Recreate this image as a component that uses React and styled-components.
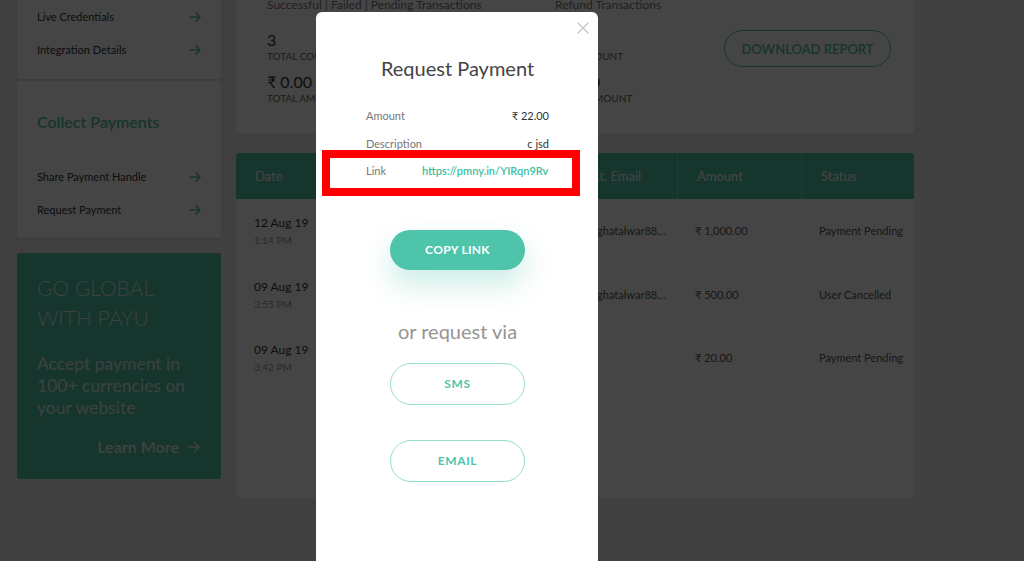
import React from 'react';
import styled, { createGlobalStyle } from 'styled-components';

const GREEN = '#52c2a3';
const TEAL = '#4ec5aa';

const GlobalStyle = createGlobalStyle`
  html, body { margin: 0; padding: 0; height: 100%; overflow: hidden; }
  body {
    background: #ebebeb;
    font-family: Lato, "Open Sans", "Noto Sans", "DejaVu Sans", sans-serif;
    color: #333;
  }
  * { box-sizing: border-box; }
`;

const Page = styled.div`
  display: flex;
  align-items: flex-start;
  gap: 15px;
  padding: 0 17px;
  margin-top: -33px;
`;

const Sidebar = styled.aside`
  width: 204px;
  flex: none;
  display: flex;
  flex-direction: column;
`;

const SideCard = styled.section`
  background: #fff;
  border-radius: 3px;
  box-shadow: 0 1px 3px rgba(0, 0, 0, 0.08);
  padding: ${(p) => p.$pad};
  margin-top: ${(p) => p.$gap || 0}px;
`;

const SectionTitle = styled.h3`
  margin: 0 0 27px;
  font-size: 16px;
  line-height: 22px;
  font-weight: 600;
  color: ${GREEN};
`;

const NavItem = styled.div`
  display: flex;
  justify-content: space-between;
  align-items: center;
  height: 33px;
  font-size: 11px;
  color: #333;
`;

const PromoCard = styled.section`
  margin-top: 15px;
  background: ${GREEN};
  border-radius: 3px;
  padding: 20px 21px 22px 20px;
  color: rgba(255, 255, 255, 0.82);
`;

const PromoTitle = styled.div`
  font-size: 21px;
  line-height: 30px;
  font-weight: 300;
  text-transform: uppercase;
`;

const PromoText = styled.div`
  margin-top: 20px;
  font-size: 17.5px;
  line-height: 22px;
  font-weight: 400;
`;

const LearnMore = styled.div`
  margin-top: 18px;
  display: flex;
  justify-content: flex-end;
  align-items: center;
  gap: 9px;
  font-size: 16px;
  line-height: 20px;
  font-weight: 700;
`;

const Main = styled.main`
  width: 678px;
  flex: none;
  display: flex;
  flex-direction: column;
`;

const SummaryCard = styled.section`
  background: #fff;
  border-radius: 3px;
  padding: 30px 23px 29px 31px;
  display: flex;
  align-items: flex-start;
`;

const StatGroup = styled.div`
  width: ${(p) => p.$width}px;
  flex: none;
`;

const StatTitle = styled.div`
  font-size: 12px;
  line-height: 16px;
  color: #777;
  white-space: nowrap;
`;

const StatValue = styled.div`
  margin-top: ${(p) => p.$gap}px;
  font-size: 16px;
  line-height: 20px;
  color: #333;
`;

const StatLabel = styled.div`
  font-size: 10px;
  line-height: 12px;
  text-transform: uppercase;
  color: #666;
`;

const DownloadButton = styled.button`
  margin-left: auto;
  margin-top: 33px;
  width: 167px;
  height: 37px;
  border: 1px solid ${GREEN};
  border-radius: 19px;
  background: transparent;
  color: ${GREEN};
  font-family: inherit;
  font-size: 13px;
  font-weight: 600;
  text-transform: uppercase;
  white-space: nowrap;
  padding: 0;
`;

const TableCard = styled.section`
  margin-top: 20px;
  height: 345px;
  background: #fff;
  border-radius: 3px;
  overflow: hidden;
`;

const COLS = '110px 106px 106px 119px 124px 113px';

const HeadRow = styled.div`
  display: grid;
  grid-template-columns: ${COLS};
  height: 46px;
  background: ${GREEN};
`;

const HeadCell = styled.div`
  display: flex;
  align-items: center;
  padding: 0 19px;
  font-size: 13px;
  color: #fff;
  white-space: nowrap;
  border-left: 1px solid rgba(255, 255, 255, 0.3);
  &:first-child { border-left: none; }
`;

const BodyRow = styled.div`
  display: grid;
  grid-template-columns: ${COLS};
  height: 63.5px;
`;

const Cell = styled.div`
  display: flex;
  flex-direction: column;
  justify-content: center;
  padding: 0 6px 0 18px;
  font-size: 11px;
  color: #555;
  min-width: 0;
  white-space: nowrap;
`;

const Ellipsis = styled.span`
  overflow: hidden;
  text-overflow: ellipsis;
`;

const DateMain = styled.div`
  font-size: 12px;
  color: #333;
`;

const DateTime = styled.div`
  margin-top: 4px;
  font-size: 10px;
  color: #999;
`;

const Overlay = styled.div`
  position: fixed;
  inset: 0;
  background: rgba(0, 0, 0, 0.73);
  z-index: 10;
`;

const Modal = styled.div`
  position: fixed;
  left: 316px;
  top: 12px;
  width: 282px;
  height: 600px;
  background: #fff;
  border-radius: 6px;
  z-index: 20;
  padding: 44px 49px 0 50px;
  display: flex;
  flex-direction: column;
  align-items: center;
`;

const Close = styled.button`
  position: absolute;
  top: 9px;
  right: 8px;
  width: 14px;
  height: 14px;
  padding: 0;
  border: none;
  background: none;
  display: flex;
`;

const ModalTitle = styled.h2`
  margin: 0;
  font-size: 20px;
  line-height: 24px;
  font-weight: 400;
  color: #444;
`;

const InfoList = styled.div`
  align-self: stretch;
  margin-top: 22px;
`;

const InfoRow = styled.div`
  display: flex;
  justify-content: space-between;
  align-items: center;
  height: 27.5px;
  font-size: 11px;
`;

const InfoLabel = styled.span`
  color: #777;
`;

const InfoValue = styled.span`
  color: #333;
`;

const LinkValue = styled.span`
  width: 127px;
  overflow: hidden;
  white-space: nowrap;
  color: #3dbf9f;
  font-weight: 600;
`;

const Annotation = styled.div`
  position: absolute;
  left: 6px;
  top: 138px;
  width: 258px;
  height: 46px;
  border: 8px solid #ff0000;
  pointer-events: none;
`;

const CopyButton = styled.button`
  margin-top: 45px;
  width: 135px;
  height: 40px;
  border: none;
  border-radius: 20px;
  background: ${TEAL};
  color: #fff;
  font-family: inherit;
  font-size: 12px;
  font-weight: 700;
  letter-spacing: 0.3px;
  box-shadow: 0 14px 28px rgba(78, 197, 170, 0.3);
`;

const OrText = styled.div`
  margin-top: 49px;
  font-size: 20px;
  line-height: 24px;
  color: #959595;
`;

const OutlineButton = styled.button`
  margin-top: ${(p) => p.$gap}px;
  width: 135px;
  height: 42px;
  border: 1.5px solid #92e0cc;
  border-radius: 21px;
  background: #fff;
  color: ${TEAL};
  font-family: inherit;
  font-size: 12px;
  font-weight: 700;
  letter-spacing: 0.6px;
`;

const Arrow = ({ color }) => (
  <svg width="12" height="10" viewBox="0 0 12 10" fill="none" stroke={color} strokeWidth="1.6" strokeLinecap="round" strokeLinejoin="round">
    <path d="M1 5h10M7 1l4 4-4 4" />
  </svg>
);

const rows = [
  { date: '12 Aug 19', time: '1:14 PM', name: 'c jsd', phone: '9876543210', email: 'amitghatalwar8877@gmail.com', amount: '₹ 1,000.00', status: 'Payment Pending' },
  { date: '09 Aug 19', time: '3:55 PM', name: 'test', phone: '9876543210', email: 'amitghatalwar8877@gmail.com', amount: '₹ 500.00', status: 'User Cancelled' },
  { date: '09 Aug 19', time: '3:42 PM', name: 'demo', phone: '9876543210', email: '', amount: '₹ 20.00', status: 'Payment Pending' },
];

export default function App() {
  return (
    <>
      <GlobalStyle />
      <Page>
        <Sidebar>
          <SideCard $pad="0 20px 13px">
            <NavItem>Test Credentials<Arrow color={GREEN} /></NavItem>
            <NavItem>Live Credentials<Arrow color={GREEN} /></NavItem>
            <NavItem>Integration Details<Arrow color={GREEN} /></NavItem>
          </SideCard>
          <SideCard $pad="30px 20px 12px" $gap={2}>
            <SectionTitle>Collect Payments</SectionTitle>
            <NavItem>Share Payment Handle<Arrow color={GREEN} /></NavItem>
            <NavItem>Request Payment<Arrow color={GREEN} /></NavItem>
          </SideCard>
          <PromoCard>
            <PromoTitle>Go Global<br />With PayU</PromoTitle>
            <PromoText>Accept payment in<br />100+ currencies on<br />your website</PromoText>
            <LearnMore>Learn More<Arrow color="rgba(255,255,255,0.85)" /></LearnMore>
          </PromoCard>
        </Sidebar>
        <Main>
          <SummaryCard>
            <StatGroup $width={288}>
              <StatTitle>Successful | Failed | Pending Transactions</StatTitle>
              <StatValue $gap={17}>3</StatValue>
              <StatLabel>Total Count</StatLabel>
              <StatValue $gap={10}>₹ 0.00</StatValue>
              <StatLabel>Total Amount</StatLabel>
            </StatGroup>
            <StatGroup $width={150}>
              <StatTitle>Refund Transactions</StatTitle>
              <StatValue $gap={17}>0</StatValue>
              <StatLabel>Total Count</StatLabel>
              <StatValue $gap={10}>₹ 0.00</StatValue>
              <StatLabel>Total Amount</StatLabel>
            </StatGroup>
            <DownloadButton>Download Report</DownloadButton>
          </SummaryCard>
          <TableCard>
            <HeadRow>
              <HeadCell>Date</HeadCell>
              <HeadCell>Name</HeadCell>
              <HeadCell>Phone</HeadCell>
              <HeadCell>Cust. Email</HeadCell>
              <HeadCell>Amount</HeadCell>
              <HeadCell>Status</HeadCell>
            </HeadRow>
            {rows.map((r, i) => (
              <BodyRow key={i}>
                <Cell>
                  <DateMain>{r.date}</DateMain>
                  <DateTime>{r.time}</DateTime>
                </Cell>
                <Cell><Ellipsis>{r.name}</Ellipsis></Cell>
                <Cell><Ellipsis>{r.phone}</Ellipsis></Cell>
                <Cell><Ellipsis>{r.email}</Ellipsis></Cell>
                <Cell>{r.amount}</Cell>
                <Cell>{r.status}</Cell>
              </BodyRow>
            ))}
          </TableCard>
        </Main>
      </Page>

      <Overlay />
      <Modal>
        <Close aria-label="Close">
          <svg width="14" height="14" viewBox="0 0 14 14" stroke="#c4c4c4" strokeWidth="1.2" strokeLinecap="round">
            <path d="M2 2l10 10M12 2L2 12" />
          </svg>
        </Close>
        <ModalTitle>Request Payment</ModalTitle>
        <InfoList>
          <InfoRow><InfoLabel>Amount</InfoLabel><InfoValue>₹ 22.00</InfoValue></InfoRow>
          <InfoRow><InfoLabel>Description</InfoLabel><InfoValue>c jsd</InfoValue></InfoRow>
          <InfoRow><InfoLabel>Link</InfoLabel><LinkValue>https://pmny.in/YIRqn9RvEk2P</LinkValue></InfoRow>
        </InfoList>
        <Annotation />
        <CopyButton>COPY LINK</CopyButton>
        <OrText>or request via</OrText>
        <OutlineButton $gap={20}>SMS</OutlineButton>
        <OutlineButton $gap={35}>EMAIL</OutlineButton>
      </Modal>
    </>
  );
}
